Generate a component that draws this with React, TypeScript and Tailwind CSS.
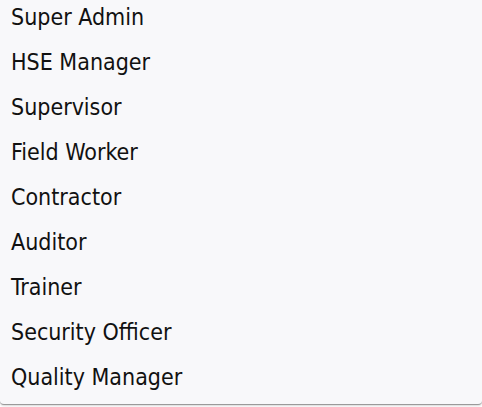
const roles = [
  "Super Admin",
  "HSE Manager",
  "Supervisor",
  "Field Worker",
  "Contractor",
  "Auditor",
  "Trainer",
  "Security Officer",
  "Quality Manager",
];

export default function App() {
  return (
    <div className="h-[407px] w-[482px] bg-white">
      <ul
        className="h-[405px] w-[482px] overflow-hidden rounded-b-[4px] border-b border-[#9a9a9a] bg-[#f8f8fa] shadow-[0_1px_2px_rgba(0,0,0,0.15)]"
        style={{ fontFamily: '"DejaVu Sans Condensed", "DejaVu Sans", sans-serif' }}
      >
        {roles.map((role) => (
          <li
            key={role}
            className="h-[45px] pl-[11px] text-[23px] leading-[34px] text-[#111111]"
          >
            {role}
          </li>
        ))}
      </ul>
    </div>
  );
}
